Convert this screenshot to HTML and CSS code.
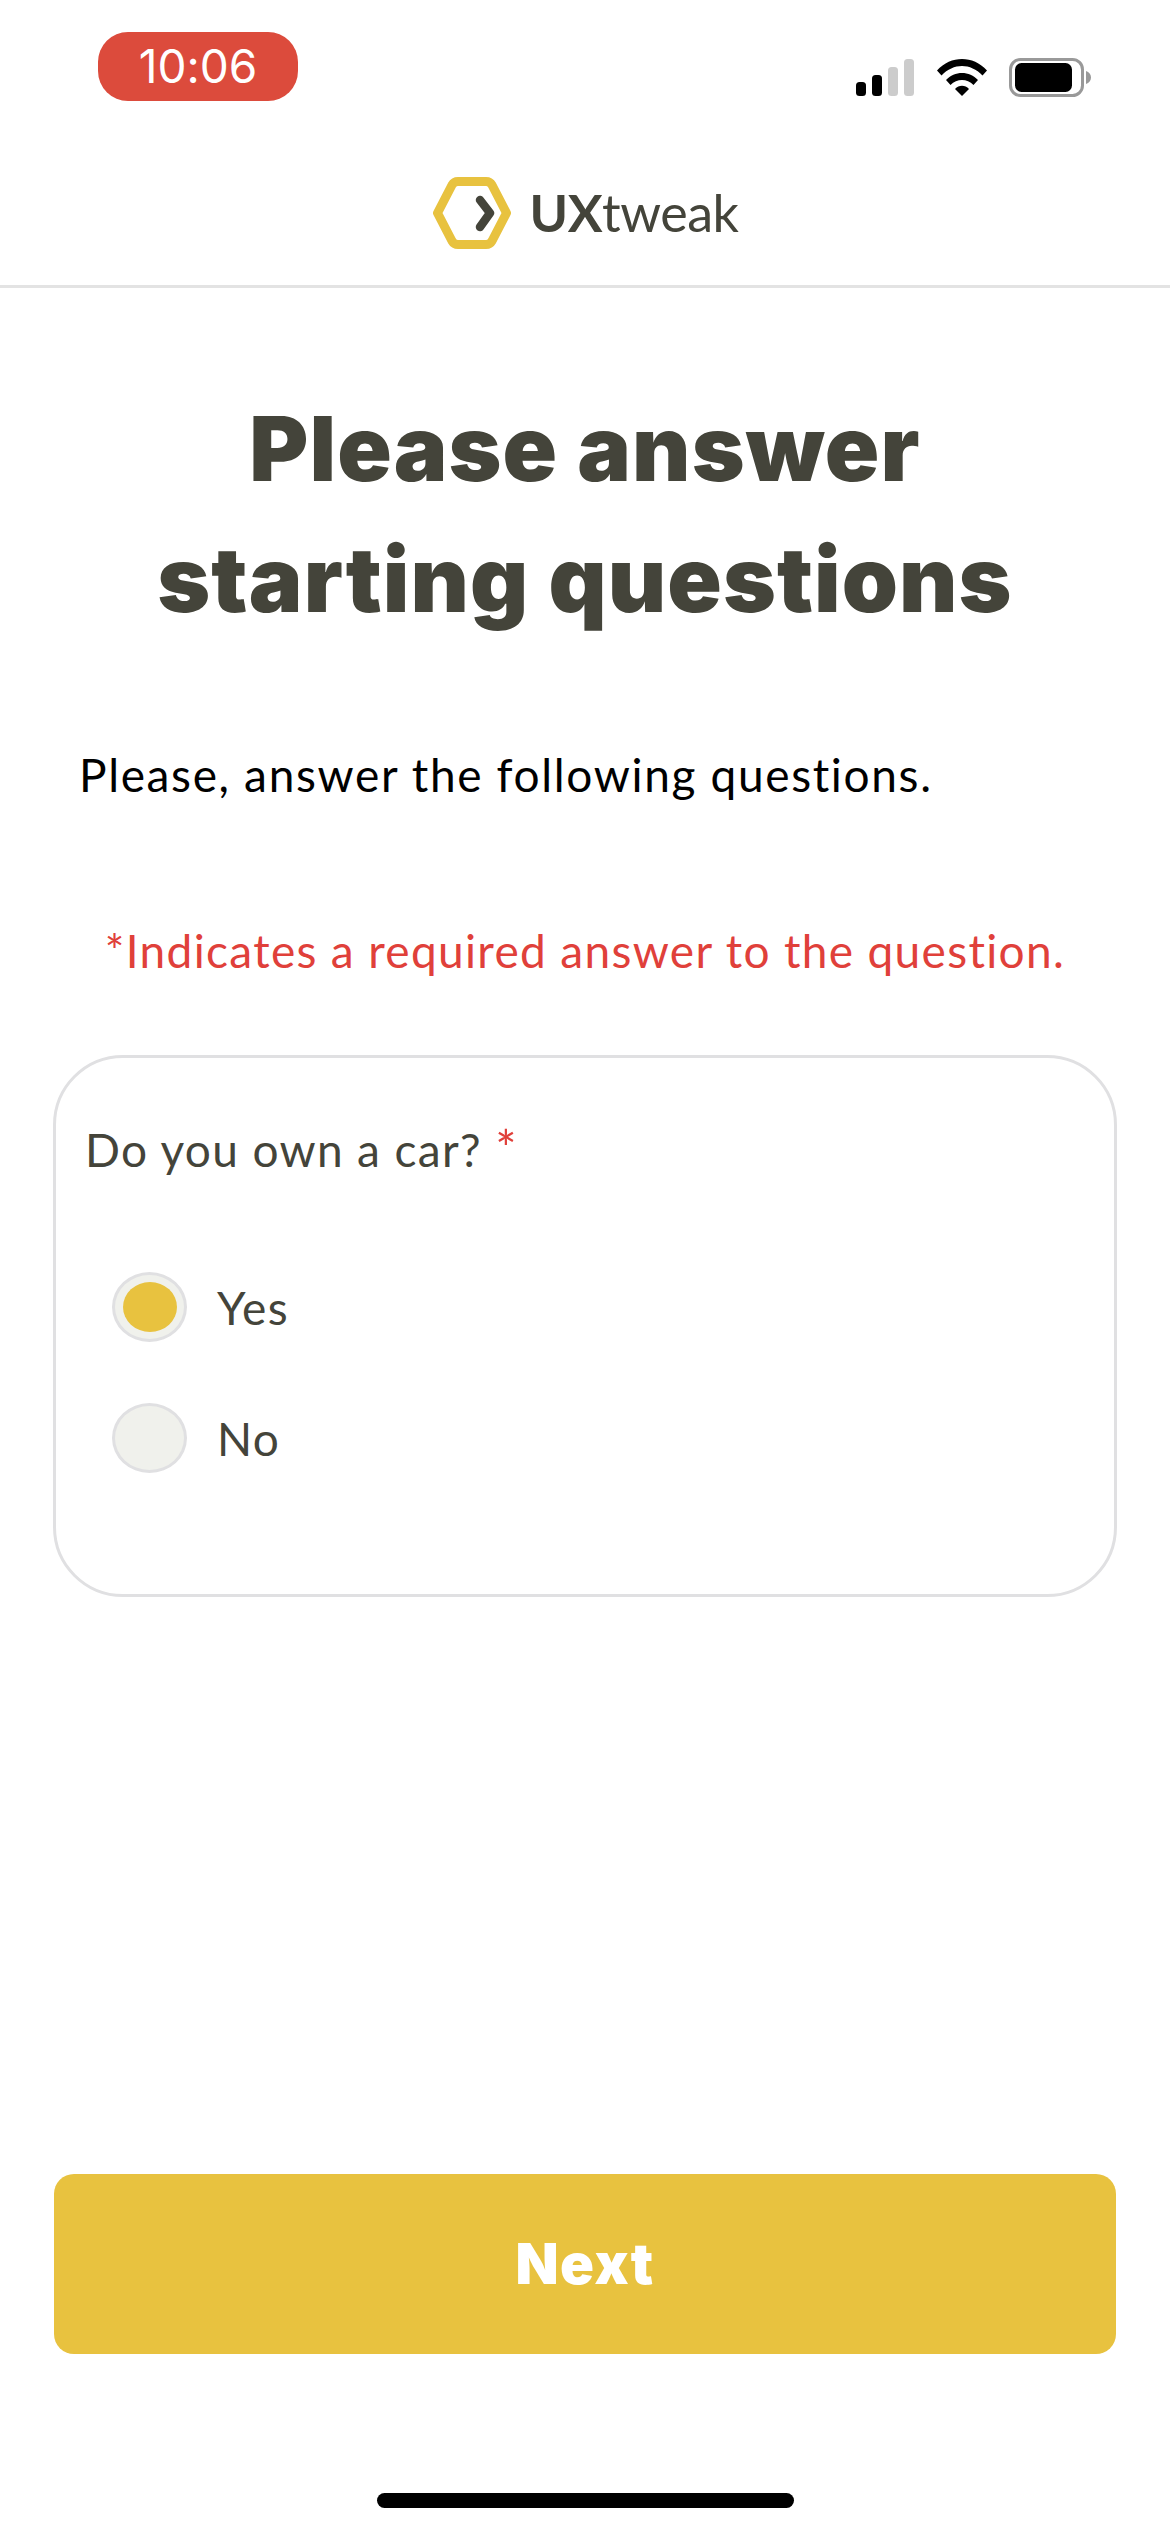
FILE: index.html
```html
<!DOCTYPE html>
<html lang="en">
<head>
<meta charset="utf-8">
<title>Please answer starting questions</title>
<link rel="stylesheet" href="styles.css">
</head>
<body>
<div class="page">
  <div class="status">
    <div class="time">10:06</div>
    <div class="status-icons">
      <svg class="sig" width="58" height="37" viewBox="0 0 58 37">
        <rect x="0" y="23" width="10" height="14" rx="3.5" fill="#000"/>
        <rect x="16" y="16" width="10" height="21" rx="3.5" fill="#000"/>
        <rect x="32" y="8" width="10" height="29" rx="3.5" fill="#ccc"/>
        <rect x="48" y="0" width="10" height="37" rx="3.5" fill="#ccc"/>
      </svg>
      <svg class="wifi" width="50" height="37" viewBox="0 0 50 37">
        <path d="M0 11.5 C14 -3.8 36 -3.8 50 11.5 L45.5 16.5 C33.5 3.8 16.5 3.8 4.5 16.5Z" fill="#000"/>
        <path d="M9 21 C17.5 11.5 32.5 11.5 41 21 L36.5 26 C30 19.2 20 19.2 13.5 26Z" fill="#000"/>
        <path d="M18 30 C22 25.8 28 25.8 32 30 L25 37Z" fill="#000"/>
      </svg>
      <svg class="batt" width="82" height="39" viewBox="0 0 82 39">
        <rect x="1.5" y="1.5" width="72" height="36" rx="10" fill="none" stroke="#999" stroke-width="3"/>
        <rect x="6" y="5" width="57" height="29" rx="6.5" fill="#000"/>
        <path d="M77 13 C80 14 82 16.5 82 19.5 C82 22.5 80 25 77 26Z" fill="#999"/>
      </svg>
    </div>
  </div>

  <header class="brand">
    <svg class="hex" width="80" height="72" viewBox="0 0 80 72">
      <path d="M5.5 36 L20 8 Q22 4.5 26 4.5 H54 Q58 4.5 60 8 L74.5 36 L60 64 Q58 67.5 54 67.5 H26 Q22 67.5 20 64Z" fill="none" stroke="#e8c23f" stroke-width="9" stroke-linejoin="round"/>
      <path d="M48 23 L58 36 L48 50" fill="none" stroke="#44443a" stroke-width="8.5" stroke-linecap="round" stroke-linejoin="round"/>
    </svg>
    <span class="wordmark"><b class="ux">UX</b>tweak</span>
  </header>

  <main class="content">
    <h1 class="title">Please answer<br>starting questions</h1>
    <p class="intro">Please, answer the following questions.</p>
    <p class="required-note">*Indicates a required answer to the question.</p>
    <section class="card">
      <div class="question">Do you own a car? <span class="star">*</span></div>
      <div class="option">
        <span class="radio radio-on"></span>
        <span class="label">Yes</span>
      </div>
      <div class="option">
        <span class="radio"></span>
        <span class="label">No</span>
      </div>
    </section>
  </main>

  <div class="footer">
    <button class="next" type="button">Next</button>
    <div class="home"></div>
  </div>
</div>
</body>
</html>
```
FILE: styles.css
```css
* { box-sizing: border-box; }
html, body { margin: 0; padding: 0; background: #fff; }
.page {
  width: 1170px;
  height: 2532px;
  display: flex;
  flex-direction: column;
  font-family: "Lato", "Noto Sans", sans-serif;
  font-variant-ligatures: none;
  color: #44443a;
  overflow: hidden;
}
.status {
  height: 144px;
  padding: 32px 79px 0 98px;
  display: flex;
  justify-content: space-between;
  align-items: flex-start;
}
.time {
  width: 200px;
  height: 69px;
  border-radius: 30px;
  background: #dc4b3c;
  color: #fff;
  font-family: "Inter", "Liberation Sans", sans-serif;
  font-size: 46px;
  line-height: 69px;
  text-align: center;
}
.status-icons {
  display: flex;
  align-items: flex-start;
  margin-top: 26px;
}
.sig { margin-top: 1px; }
.wifi { margin: 1px 0 0 23px; }
.batt { margin-left: 22px; }
.brand {
  height: 144px;
  border-bottom: 3px solid #e3e3e3;
  display: flex;
  align-items: flex-start;
  justify-content: center;
  padding: 33px 0 0 0;
}
.wordmark {
  margin: 5px 0 0 18px;
  font-size: 52px;
  line-height: 60px;
  color: #44443a;
  letter-spacing: -0.5px;
}
.ux { font-weight: 700; }
.content { display: flex; flex-direction: column; }
.title {
  margin: 95px 0 0;
  font-family: "Inter", "Lato", sans-serif;
  font-size: 90px;
  line-height: 131px;
  font-weight: 900;
  letter-spacing: 1.1px;
  text-align: center;
  color: #44443a;
}
.intro {
  margin: 100px 0 0 79px;
  font-size: 46px;
  line-height: 60px;
  letter-spacing: 1.65px;
  color: #000;
}
.required-note {
  margin: 116px 0 0;
  font-size: 46px;
  line-height: 60px;
  letter-spacing: 1.33px;
  color: #e0403a;
  text-align: center;
}
.card {
  margin: 74px 53px 0;
  height: 542px;
  border: 3px solid #e0e0e2;
  border-radius: 70px;
  padding: 62px 0 0 29px;
}
.question {
  font-size: 46px;
  line-height: 60px;
  letter-spacing: 1.35px;
  color: #44443a;
}
.star {
  color: #e0403a;
  font-size: 50px;
  line-height: 40px;
}
.option {
  display: flex;
  align-items: center;
  height: 74px;
  margin: 57px 0 0 27px;
  font-size: 46px;
  letter-spacing: 1.35px;
}
.question + .option { margin-top: 90px; }
.radio {
  width: 75px;
  height: 70px;
  border: 3px solid #e0e0e2;
  border-radius: 50%;
  background: #f0f1ec;
  display: flex;
  align-items: center;
  justify-content: center;
  flex: none;
}
.radio-on::after {
  content: "";
  width: 54px;
  height: 50px;
  border-radius: 50%;
  background: #e8c23f;
}
.label { margin-left: 30px; }
.footer {
  margin-top: auto;
  display: flex;
  flex-direction: column;
  align-items: center;
  padding-bottom: 24px;
}
.next {
  width: 1062px;
  height: 180px;
  border: 0;
  border-radius: 20px;
  background: #e8c23f;
  color: #fff;
  font-family: "Inter", "Lato", sans-serif;
  font-size: 56px;
  font-weight: 900;
  letter-spacing: 1.5px;
}
.home {
  width: 417px;
  height: 15px;
  margin-top: 139px;
  border-radius: 8px;
  background: #000;
}
```
